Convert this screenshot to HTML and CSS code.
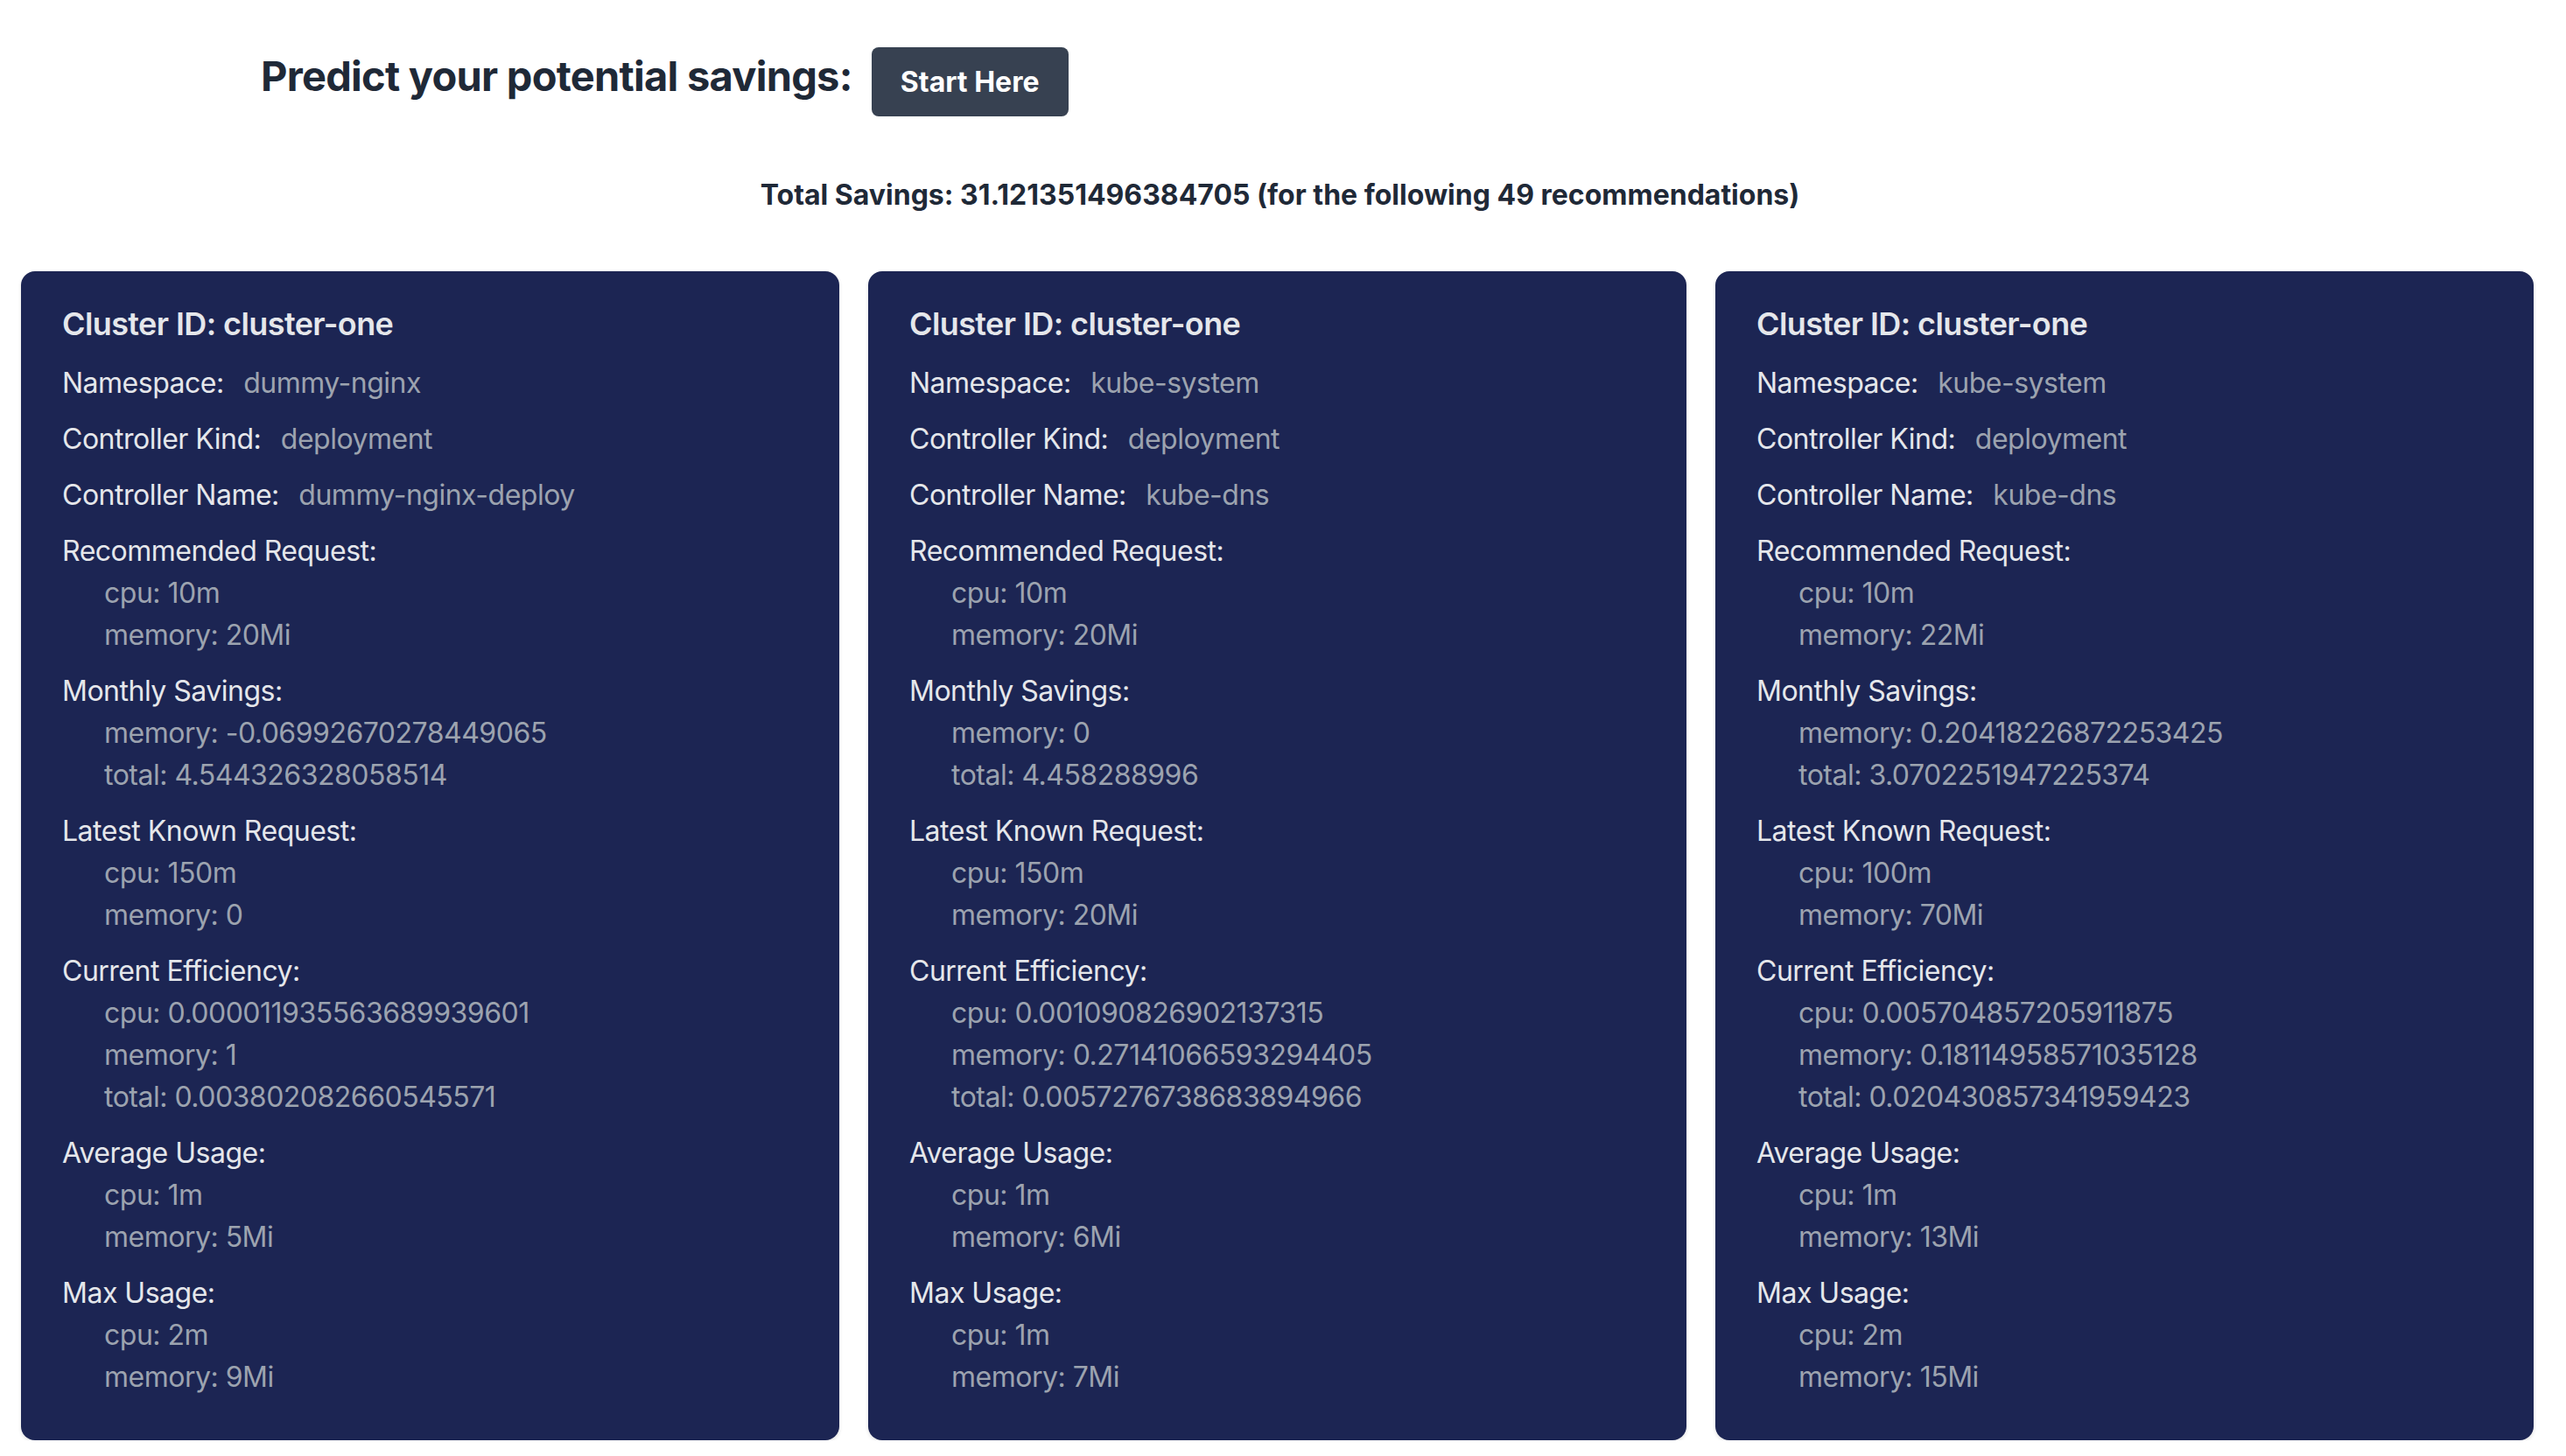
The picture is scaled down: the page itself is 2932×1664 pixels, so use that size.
FILE: index.html
```html
<!DOCTYPE html>
<html lang="en">
<head>
<meta charset="utf-8">
<title>Savings</title>
<link rel="stylesheet" href="styles.css">
</head>
<body>
<div class="page">
  <header class="predict">
    <h1 class="predict-title">Predict your potential savings:</h1>
    <button class="start-btn">Start Here</button>
  </header>
  <p class="total">Total Savings: 31.121351496384705 (for the following 49 recommendations)</p>

  <div class="cards">
    <div class="card">
      <h2 class="card-title">Cluster ID: cluster-one</h2>
      <div class="field">Namespace: <span class="val">dummy-nginx</span></div>
      <div class="field">Controller Kind: <span class="val">deployment</span></div>
      <div class="field">Controller Name: <span class="val">dummy-nginx-deploy</span></div>
      <div class="field">Recommended Request:
        <div class="sub">cpu: 10m</div>
        <div class="sub">memory: 20Mi</div>
      </div>
      <div class="field">Monthly Savings:
        <div class="sub">memory: -0.06992670278449065</div>
        <div class="sub">total: 4.544326328058514</div>
      </div>
      <div class="field">Latest Known Request:
        <div class="sub">cpu: 150m</div>
        <div class="sub">memory: 0</div>
      </div>
      <div class="field">Current Efficiency:
        <div class="sub">cpu: 0.000011935563689939601</div>
        <div class="sub">memory: 1</div>
        <div class="sub">total: 0.003802082660545571</div>
      </div>
      <div class="field">Average Usage:
        <div class="sub">cpu: 1m</div>
        <div class="sub">memory: 5Mi</div>
      </div>
      <div class="field">Max Usage:
        <div class="sub">cpu: 2m</div>
        <div class="sub">memory: 9Mi</div>
      </div>
    </div>

    <div class="card">
      <h2 class="card-title">Cluster ID: cluster-one</h2>
      <div class="field">Namespace: <span class="val">kube-system</span></div>
      <div class="field">Controller Kind: <span class="val">deployment</span></div>
      <div class="field">Controller Name: <span class="val">kube-dns</span></div>
      <div class="field">Recommended Request:
        <div class="sub">cpu: 10m</div>
        <div class="sub">memory: 20Mi</div>
      </div>
      <div class="field">Monthly Savings:
        <div class="sub">memory: 0</div>
        <div class="sub">total: 4.458288996</div>
      </div>
      <div class="field">Latest Known Request:
        <div class="sub">cpu: 150m</div>
        <div class="sub">memory: 20Mi</div>
      </div>
      <div class="field">Current Efficiency:
        <div class="sub">cpu: 0.001090826902137315</div>
        <div class="sub">memory: 0.27141066593294405</div>
        <div class="sub">total: 0.0057276738683894966</div>
      </div>
      <div class="field">Average Usage:
        <div class="sub">cpu: 1m</div>
        <div class="sub">memory: 6Mi</div>
      </div>
      <div class="field">Max Usage:
        <div class="sub">cpu: 1m</div>
        <div class="sub">memory: 7Mi</div>
      </div>
    </div>

    <div class="card">
      <h2 class="card-title">Cluster ID: cluster-one</h2>
      <div class="field">Namespace: <span class="val">kube-system</span></div>
      <div class="field">Controller Kind: <span class="val">deployment</span></div>
      <div class="field">Controller Name: <span class="val">kube-dns</span></div>
      <div class="field">Recommended Request:
        <div class="sub">cpu: 10m</div>
        <div class="sub">memory: 22Mi</div>
      </div>
      <div class="field">Monthly Savings:
        <div class="sub">memory: 0.20418226872253425</div>
        <div class="sub">total: 3.0702251947225374</div>
      </div>
      <div class="field">Latest Known Request:
        <div class="sub">cpu: 100m</div>
        <div class="sub">memory: 70Mi</div>
      </div>
      <div class="field">Current Efficiency:
        <div class="sub">cpu: 0.005704857205911875</div>
        <div class="sub">memory: 0.18114958571035128</div>
        <div class="sub">total: 0.020430857341959423</div>
      </div>
      <div class="field">Average Usage:
        <div class="sub">cpu: 1m</div>
        <div class="sub">memory: 13Mi</div>
      </div>
      <div class="field">Max Usage:
        <div class="sub">cpu: 2m</div>
        <div class="sub">memory: 15Mi</div>
      </div>
    </div>
  </div>
</div>
</body>
</html>
```

FILE: styles.css
```css
* { box-sizing: border-box; }
html, body {
  margin: 0;
  padding: 0;
  background: #ffffff;
}
body {
  font-family: Inter, "Noto Sans", "Liberation Sans", sans-serif;
  color: #1f2937;
}
.page {
  padding: 54px 37px 0 24px;
}
.predict {
  display: flex;
  align-items: flex-start;
  gap: 22px;
  padding-left: 274px;
}
.predict-title {
  margin: 9px 0 0 0;
  font-size: 47px;
  line-height: 48px;
  font-weight: 700;
  color: #1f2937;
  letter-spacing: -0.75px;
}
.start-btn {
  font-family: inherit;
  background: #374151;
  color: #ffffff;
  border: none;
  border-radius: 8px;
  font-size: 32px;
  font-weight: 700;
  line-height: 47px;
  padding: 16px 0;
  width: 225px;
  height: 79px;
  text-align: center;
}
.total {
  margin: 66px 0 0 0;
  text-align: center;
  font-size: 32px;
  line-height: 48px;
  font-weight: 700;
  color: #1f2937;
  padding-left: 6px;
}
.cards {
  display: grid;
  grid-template-columns: repeat(3, 1fr);
  gap: 33px;
  margin-top: 63px;
}
.card {
  background: #1c2553;
  border-radius: 16px;
  padding: 32px 47px 32px 47px;
  color: #e5e7eb;
  font-size: 32px;
  line-height: 48px;
  letter-spacing: -0.5px;
  box-shadow: 0 2px 4px rgba(0,0,0,0.12);
}
.card-title {
  margin: 0 0 16px 0;
  font-size: 36px;
  line-height: 56px;
  font-weight: 600;
  color: #e5e7eb;
  letter-spacing: -0.6px;
}
.field {
  margin-bottom: 16px;
}
.val {
  color: #9ca3af;
  margin-left: 14px;
}
.sub {
  color: #9ca3af;
  padding-left: 48px;
}
```
